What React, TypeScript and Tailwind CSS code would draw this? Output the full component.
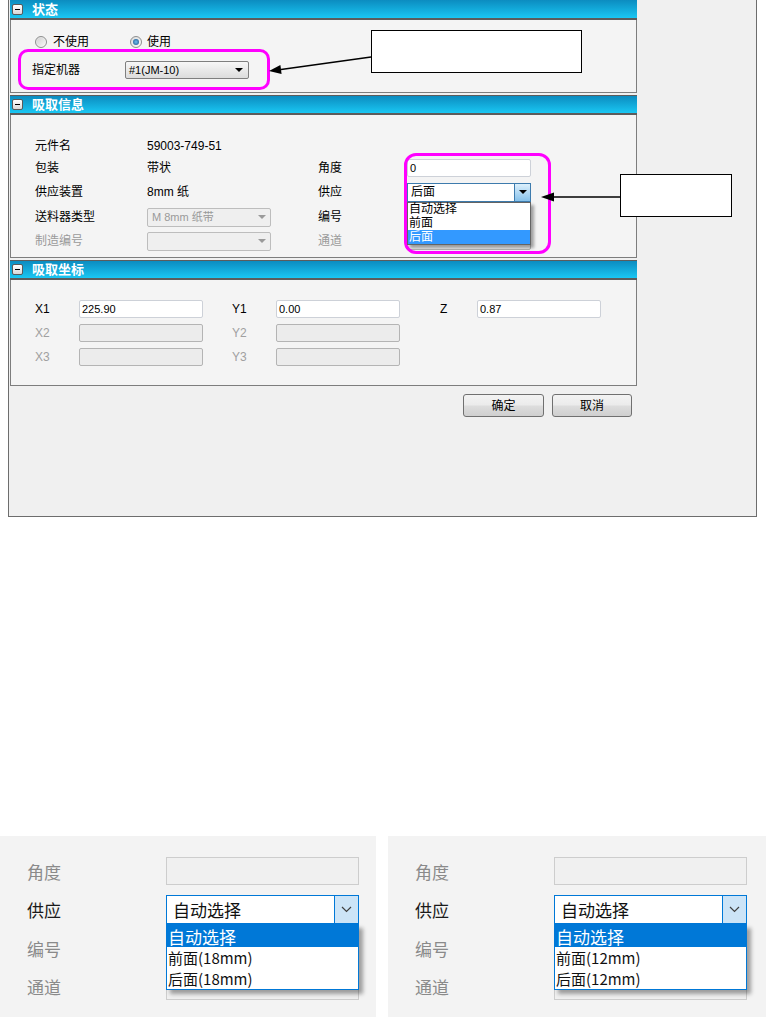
const F = "font-['Liberation_Sans','Noto_Sans_CJK_SC',sans-serif]";

function Header({ title, first = false }: { title: string; first?: boolean }) {
  return (
    <div
      className={
        first
          ? "h-[20px] flex items-center bg-linear-to-b from-[#0c8cc0] to-[#1ac7f3] border-b-2 border-[#5c5c5c]"
          : "h-[20px] flex items-center bg-linear-to-b from-[#0c8cc0] to-[#1ac7f3] border-t border-b-2 border-[#5c5c5c]"
      }
    >
      <div className="ml-[2px] w-[11px] h-[11px] rounded-[2px] border border-[#5a5a5a] bg-linear-to-b from-white to-[#d8d8d8] flex items-center justify-center">
        <div className="w-[5px] h-[1px] bg-black" />
      </div>
      <span className="ml-[9px] text-[13px] font-bold text-white leading-none">{title}</span>
    </div>
  );
}

function Radio({ checked = false }: { checked?: boolean }) {
  return (
    <div className="w-[12px] h-[12px] rounded-full border border-[#8e8f8f] bg-linear-to-br from-[#dcdcdc] to-[#fbfbfb] flex items-center justify-center">
      {checked ? (
        <div className="w-[6px] h-[6px] rounded-full bg-radial from-[#6fc0f0] to-[#164f88]" />
      ) : (
        <div className="w-[8px] h-[8px] rounded-full bg-linear-to-br from-[#d4d4d4] to-[#f4f4f4]" />
      )}
    </div>
  );
}

function Tri({ gray = false }: { gray?: boolean }) {
  return (
    <div
      className={
        gray
          ? "w-0 h-0 border-l-[4px] border-r-[4px] border-t-[4px] border-l-transparent border-r-transparent border-t-[#9a9a9a]"
          : "w-0 h-0 border-l-[4px] border-r-[4px] border-t-[4px] border-l-transparent border-r-transparent border-t-black"
      }
    />
  );
}

function Input({ value = "", disabled = false }: { value?: string; disabled?: boolean }) {
  return (
    <div
      className={
        disabled
          ? "w-[124px] h-[18px] rounded-[2px] border border-[#b4b4b4] bg-[#ececec]"
          : "w-[124px] h-[18px] rounded-[2px] border border-[#cdd1d8] bg-white flex items-center pl-[2px] text-[11px] leading-none"
      }
    >
      {value}
    </div>
  );
}

function DisabledSelect({ value = "" }: { value?: string }) {
  return (
    <div className="w-[124px] h-[19px] rounded-[2px] border border-[#bdbdbd] bg-[#efefef] flex items-center justify-between pl-[4px] pr-[4px] text-[11px] text-[#9a9a9a] leading-none">
      <span>{value}</span>
      <Tri gray />
    </div>
  );
}

function Button({ label, w }: { label: string; w: string }) {
  return (
    <div
      className={`${w} h-[23px] rounded-[3px] border border-[#707070] bg-[linear-gradient(to_bottom,#f3f3f3_0%,#ebebeb_48%,#dddddd_52%,#cfcfcf_100%)] flex items-center justify-center text-[12px] leading-none`}
    >
      {label}
    </div>
  );
}

function Shot({ size, w }: { size: string; w: string }) {
  return (
    <div className={`${w} h-[181px] bg-[#f3f3f3] pl-[27px] pt-[21px] font-['Noto_Sans_CJK_SC',sans-serif] text-[17px] leading-none`}>
      <div className="flex items-center h-[28px]">
        <span className="w-[139px] text-[#8a8a8a]">角度</span>
        <div className="w-[193px] h-[28px] border border-[#cdcdcd] bg-[#f0f0f0]" />
      </div>
      <div className="flex items-center h-[29px] mt-[10px]">
        <span className="w-[139px] text-[#1a1a1a]">供应</span>
        <div className="relative w-[193px] h-[29px] border border-[#0078d7] bg-white flex items-center pl-[6px] text-[#111]">
          自动选择
          <div className="absolute right-0 top-0 bottom-0 w-[24px] bg-[#cce4f7] border-l border-[#0078d7] flex items-center justify-center">
            <svg width="11" height="7" viewBox="0 0 11 7">
              <polyline points="1,1 5.5,5.5 10,1" fill="none" stroke="#404040" strokeWidth="1.2" />
            </svg>
          </div>
          <div className="absolute left-[-1px] top-[28px] w-[193px] border border-[#0078d7] bg-white shadow-[4px_4px_4px_rgba(0,0,0,0.35)] z-10 text-[15px]">
            <div className="h-[22px] bg-[#0078d7] text-white text-[17px] flex items-center pl-[1px]">自动选择</div>
            <div className="h-[21px] flex items-center pl-[1px] text-[#111]">前面({size}mm)</div>
            <div className="h-[21px] flex items-center pl-[1px] text-[#111]">后面({size}mm)</div>
          </div>
        </div>
      </div>
      <div className="flex items-center h-[28px] mt-[10px]">
        <span className="w-[139px] text-[#8a8a8a]">编号</span>
        <div className="w-[193px] h-[28px] border border-[#cdcdcd] bg-[#f0f0f0]" />
      </div>
      <div className="flex items-center h-[28px] mt-[10px]">
        <span className="w-[139px] text-[#8a8a8a]">通道</span>
        <div className="w-[193px] h-[28px] border border-[#cdcdcd] bg-[#f0f0f0]" />
      </div>
    </div>
  );
}

export default function App() {
  return (
    <div className={`relative w-[766px] h-[1017px] bg-white overflow-hidden ${F} text-[12px] text-black`}>
      {/* dialog */}
      <div className="ml-[8px] w-[749px] h-[517px] border-x border-b border-[#6d6d6d] bg-[#f0f0f0]">
        <div className="ml-[1px] w-[627px]">
          <Header title="状态" first />
          <div className="h-[73px] bg-[#f4f4f4] border-x border-b border-[#7d7d7d] pt-[15px]">
            <div className="flex items-center h-[14px] pl-[24px] leading-none">
              <div className="flex items-center gap-[6px] w-[95px]">
                <Radio />
                <span>不使用</span>
              </div>
              <div className="flex items-center gap-[5px]">
                <Radio checked />
                <span>使用</span>
              </div>
            </div>
            <div className="mt-[12px] flex items-center h-[18px] pl-[21px] leading-none">
              <span className="w-[93px]">指定机器</span>
              <div className="w-[124px] h-[18px] rounded-[2px] border border-[#7f7f7f] bg-linear-to-b from-[#f7f7f7] to-[#dcdcdc] flex items-center justify-between pl-[3px] pr-[5px] text-[11px]">
                <span>#1(JM-10)</span>
                <Tri />
              </div>
            </div>
          </div>

          <div className="h-[2px]" />
          <Header title="吸取信息" />
          <div className="h-[143px] bg-[#f4f4f4] border-x border-b border-[#7d7d7d] pt-[20px] leading-none">
            <div className="flex items-center h-[22px] pl-[24px]">
              <span className="w-[112px]">元件名</span>
              <span className="w-[171px]">59003-749-51</span>
            </div>
            <div className="flex items-center h-[22px] pl-[24px]">
              <span className="w-[112px]">包装</span>
              <span className="w-[171px]">带状</span>
              <span className="w-[89px]">角度</span>
              <Input value="0" />
            </div>
            <div className="flex items-center h-[26px] pl-[24px]">
              <span className="w-[112px]">供应装置</span>
              <span className="w-[171px]">8mm 纸</span>
              <span className="w-[89px]">供应</span>
              <div className="relative w-[124px] h-[19px] border border-[#3d7bad] bg-white flex items-center pl-[3px] text-[12px]">
                后面
                <div className="absolute right-0 top-0 bottom-0 w-[16px] border-l border-[#3d7bad] bg-linear-to-b from-[#dcf0fc] to-[#86c1ea] flex items-center justify-center">
                  <Tri />
                </div>
                <div className="absolute left-[-1px] top-[18px] w-[124px] border border-[#646464] bg-white shadow-[3px_3px_3px_rgba(0,0,0,0.35)] z-10 text-[12px]">
                  <div className="h-[13px] flex items-center pl-[1px]">自动选择</div>
                  <div className="h-[14px] flex items-center pl-[1px]">前面</div>
                  <div className="h-[14px] flex items-center pl-[1px] bg-[#3399ff] text-white">后面</div>
                </div>
              </div>
            </div>
            <div className="flex items-center h-[24px] pl-[24px]">
              <span className="w-[112px]">送料器类型</span>
              <div className="w-[171px]">
                <DisabledSelect value="M 8mm 纸带" />
              </div>
              <span className="w-[89px]">编号</span>
              <Input />
            </div>
            <div className="flex items-center h-[24px] pl-[24px] text-[#9a9a9a]">
              <span className="w-[112px]">制造编号</span>
              <div className="w-[171px]">
                <DisabledSelect />
              </div>
              <span className="w-[89px]">通道</span>
              <Input disabled />
            </div>
          </div>

          <div className="h-[2px]" />
          <Header title="吸取坐标" />
          <div className="h-[106px] bg-[#f4f4f4] border-x border-b border-[#7d7d7d] pt-[20px] flex flex-col gap-[6px] leading-none">
            <div className="flex items-center h-[18px] pl-[24px]">
              <span className="w-[44px]">X1</span>
              <Input value="225.90" />
              <span className="ml-[29px] w-[44px]">Y1</span>
              <Input value="0.00" />
              <span className="ml-[40px] w-[37px]">Z</span>
              <Input value="0.87" />
            </div>
            <div className="flex items-center h-[18px] pl-[24px] text-[#a0a0a0]">
              <span className="w-[44px]">X2</span>
              <Input disabled />
              <span className="ml-[29px] w-[44px]">Y2</span>
              <Input disabled />
            </div>
            <div className="flex items-center h-[18px] pl-[24px] text-[#a0a0a0]">
              <span className="w-[44px]">X3</span>
              <Input disabled />
              <span className="ml-[29px] w-[44px]">Y3</span>
              <Input disabled />
            </div>
          </div>

          <div className="mt-[8px] flex justify-end gap-[8px] pr-[5px]">
            <Button label="确定" w="w-[81px]" />
            <Button label="取消" w="w-[80px]" />
          </div>
        </div>
      </div>

      {/* bottom screenshots */}
      <div className="mt-[319px] flex">
        <Shot size="18" w="w-[376px]" />
        <div className="ml-[12px]">
          <Shot size="12" w="w-[378px]" />
        </div>
      </div>

      {/* annotations */}
      <div className="absolute left-[18px] top-[49px] w-[252px] h-[41px] rounded-[10px] border-[3px] border-[#ff00ff]" />
      <div className="absolute left-[404px] top-[153px] w-[147px] h-[101px] rounded-[12px] border-[3px] border-[#ff00ff]" />
      <div className="absolute left-[371px] top-[30px] w-[211px] h-[43px] border border-black bg-white" />
      <div className="absolute left-[620px] top-[174px] w-[112px] h-[43px] border border-black bg-white" />
      <svg className="absolute left-0 top-0 pointer-events-none" width="766" height="520">
        <line x1="371" y1="57" x2="281" y2="69.5" stroke="black" strokeWidth="1.3" />
        <polygon points="269,71 281.6,74 280.4,65" fill="black" />
        <line x1="620" y1="197" x2="553" y2="197" stroke="black" strokeWidth="1.3" />
        <polygon points="541,197 554,192.5 554,201.5" fill="black" />
      </svg>
    </div>
  );
}
